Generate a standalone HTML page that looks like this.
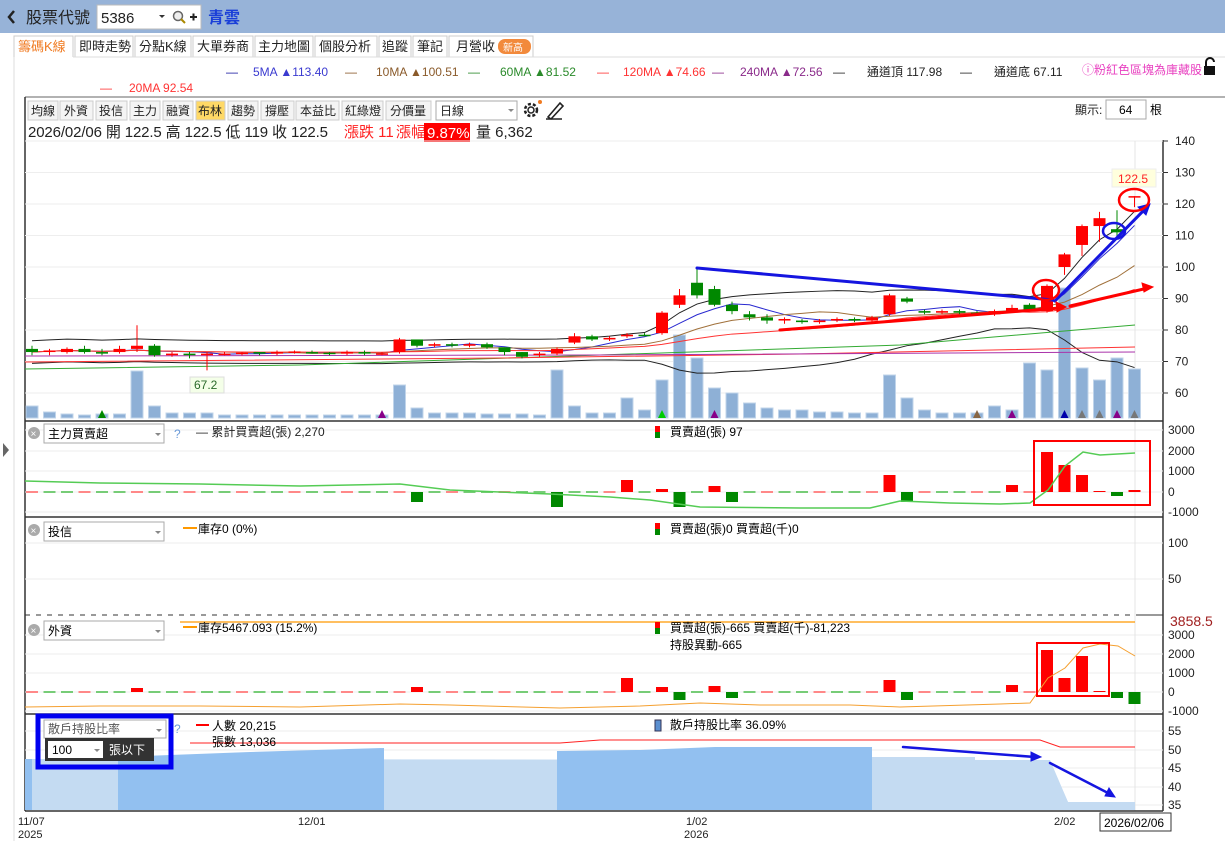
<!DOCTYPE html>
<html><head><meta charset="utf-8">
<style>
body{margin:0;width:1225px;height:841px;overflow:hidden;background:#fff;font-family:"Liberation Sans","Noto Sans CJK TC",sans-serif}
svg text{font-family:"Liberation Sans","Noto Sans CJK TC",sans-serif}
</style></head><body>
<svg id="s" width="1225" height="841" viewBox="0 0 1225 841" xmlns="http://www.w3.org/2000/svg" font-size="12">
<rect x="0" y="0" width="1225" height="33" fill="#97b3d8"/>
<path d="M14 11 L9 17 L14 23" stroke="#222" stroke-width="2.5" fill="none"/>
<text x="26" y="23" font-size="16" fill="#222">股票代號</text>
<rect x="97" y="5" width="104" height="24" fill="#fff" stroke="#bbb"/>
<text x="101" y="23" font-size="15" fill="#222">5386</text>
<path d="M159 15 l3 3 l3 -3z" fill="#333"/>
<circle cx="178" cy="16" r="4.5" fill="#eee" stroke="#666" stroke-width="1.5"/><path d="M181 19 l4 4" stroke="#a80" stroke-width="2"/>
<path d="M190 17 h7 M193.5 13.5 v7" stroke="#222" stroke-width="2"/>
<text x="208" y="23" font-size="16" font-weight="bold" fill="#1a3fd8">青雲</text>
<line x1="14" y1="56" x2="14" y2="841" stroke="#ddd"/>
<path d="M3 443 l6 7 l-6 7z" fill="#666"/>
<g font-size="13" fill="#222">
<path d="M14 57 V36 H73 V57" fill="#fff" stroke="#ccc"/>
<rect x="75" y="36" width="58" height="21" fill="#fff" stroke="#ccc"/><text x="79" y="51">即時走勢</text>
<rect x="135" y="36" width="56" height="21" fill="#fff" stroke="#ccc"/><text x="139" y="51">分點K線</text>
<rect x="193" y="36" width="60" height="21" fill="#fff" stroke="#ccc"/><text x="197" y="51">大單券商</text>
<rect x="255" y="36" width="58" height="21" fill="#fff" stroke="#ccc"/><text x="258" y="51">主力地圖</text>
<rect x="315" y="36" width="62" height="21" fill="#fff" stroke="#ccc"/><text x="319" y="51">個股分析</text>
<rect x="379" y="36" width="32" height="21" fill="#fff" stroke="#ccc"/><text x="382" y="51">追蹤</text>
<rect x="413" y="36" width="34" height="21" fill="#fff" stroke="#ccc"/><text x="417" y="51">筆記</text>
<rect x="449" y="36" width="84" height="21" fill="#fff" stroke="#ccc"/><text x="456" y="51">月營收</text>
<rect x="498" y="39" width="33" height="15" rx="7" fill="#f28a3c"/><text x="503" y="51" font-size="10" fill="#fff">新高</text>
<text x="18" y="51" fill="#f07a20">籌碼K線</text>
</g>
<line x1="73" y1="57" x2="1225" y2="57" stroke="#ddd"/>
<g font-size="12">
<text x="226" y="76" fill="#1a1aa0">—</text><text x="253" y="76" fill="#3a3ad0">5MA ▲113.40</text>
<text x="345" y="76" fill="#8a5a2a">—</text><text x="376" y="76" fill="#8a5a2a">10MA ▲100.51</text>
<text x="468" y="76" fill="#2a8a2a">—</text><text x="500" y="76" fill="#2a8a2a">60MA ▲81.52</text>
<text x="597" y="76" fill="#f33">—</text><text x="623" y="76" fill="#f33">120MA ▲74.66</text>
<text x="712" y="76" fill="#8a2a8a">—</text><text x="740" y="76" fill="#8a2a8a">240MA ▲72.56</text>
<text x="833" y="76" fill="#222">—</text><text x="867" y="76" fill="#222">通道頂 117.98</text>
<text x="960" y="76" fill="#222">—</text><text x="994" y="76" fill="#222">通道底 67.11</text>
<text x="1082" y="74" fill="#e840c0">ⓘ粉紅色區塊為庫藏股</text>
<text x="100" y="92" fill="#f33">—</text><text x="129" y="92" fill="#f33">20MA 92.54</text>
</g>
<rect x="1204" y="66" width="11" height="9" fill="#111"/><path d="M1206 66 v-4 a4 4 0 0 1 8 0" stroke="#111" stroke-width="2" fill="none"/>
<line x1="25" y1="97" x2="1225" y2="97" stroke="#666"/>
<line x1="25" y1="97" x2="25" y2="811" stroke="#333" stroke-width="1.5"/>
<line x1="1163" y1="140" x2="1163" y2="811" stroke="#333" stroke-width="1.5"/>
<g font-size="12" fill="#222">
<rect x="28" y="101" width="30" height="19" fill="#f4f4f4" stroke="#ccc"/><text x="31" y="115">均線</text>
<rect x="60" y="101" width="33" height="19" fill="#f4f4f4" stroke="#ccc"/><text x="64" y="115">外資</text>
<rect x="96" y="101" width="31" height="19" fill="#f4f4f4" stroke="#ccc"/><text x="99" y="115">投信</text>
<rect x="130" y="101" width="30" height="19" fill="#f4f4f4" stroke="#ccc"/><text x="133" y="115">主力</text>
<rect x="163" y="101" width="30" height="19" fill="#f4f4f4" stroke="#ccc"/><text x="166" y="115">融資</text>
<rect x="196" y="101" width="29" height="19" fill="#ffd966" stroke="#ccc"/><text x="198" y="115">布林</text>
<rect x="228" y="101" width="30" height="19" fill="#f4f4f4" stroke="#ccc"/><text x="231" y="115">趨勢</text>
<rect x="261" y="101" width="33" height="19" fill="#f4f4f4" stroke="#ccc"/><text x="265" y="115">撐壓</text>
<rect x="296" y="101" width="43" height="19" fill="#f4f4f4" stroke="#ccc"/><text x="300" y="115">本益比</text>
<rect x="342" y="101" width="41" height="19" fill="#f4f4f4" stroke="#ccc"/><text x="345" y="115">紅綠燈</text>
<rect x="386" y="101" width="45" height="19" fill="#f4f4f4" stroke="#ccc"/><text x="390" y="115">分價量</text>
<rect x="436" y="101" width="81" height="19" fill="#fff" stroke="#aaa"/><text x="440" y="115">日線</text>
<path d="M508 109 l3 3 l3 -3z" fill="#888"/>
</g>
<circle cx="531" cy="110" r="6" fill="none" stroke="#222" stroke-width="2.5" stroke-dasharray="3 2"/><circle cx="531" cy="110" r="3" fill="none" stroke="#222" stroke-width="1.5"/>
<circle cx="540" cy="102" r="2" fill="#f07a20"/>
<path d="M548 117 L560 103 L563 106 L551 119 Z M546 119 h16" stroke="#222" stroke-width="1.6" fill="none"/>
<text x="1075" y="114" font-size="12" fill="#222">顯示:</text>
<rect x="1106" y="100" width="40" height="19" fill="#fff" stroke="#aaa"/><text x="1119" y="114" font-size="12">64</text>
<text x="1150" y="114" font-size="12">根</text>
<g font-size="15" fill="#222">
<text x="28" y="137" textLength="300">2026/02/06 開 122.5  高 122.5  低 119  收 122.5</text>
<text x="344" y="137" fill="#f22">漲跌 11</text>
<text x="396" y="137" fill="#f22">漲幅</text>
<rect x="424" y="123" width="46" height="19" fill="#f00"/><text x="427" y="138" fill="#fff">9.87%</text>
<text x="476" y="137">量 6,362</text>
</g>
<line x1="25" y1="141" x2="1163" y2="141" stroke="#ddd"/>
<g id="grid" stroke="#eee"></g>
<g id="vol"></g>
<g id="lines" fill="none"></g>
<g id="cdl"></g>
<g font-size="12" fill="#222" id="ax"></g>
<line x1="25" y1="421" x2="1163" y2="421" stroke="#333" stroke-width="1.5"/>
<line x1="25" y1="517" x2="1163" y2="517" stroke="#333" stroke-width="1.5"/>
<line x1="25" y1="615" x2="1163" y2="615" stroke="#333" stroke-dasharray="5 6"/>
<line x1="1140" y1="615" x2="1163" y2="615" stroke="#333"/>
<line x1="25" y1="714" x2="1163" y2="714" stroke="#333" stroke-width="1.5"/>
<line x1="25" y1="811" x2="1163" y2="811" stroke="#333" stroke-width="1.5"/>
<g id="p2"></g>
<circle cx="34" cy="433" r="6" fill="#aaa"/><text x="30.5" y="437" font-size="10" fill="#fff">×</text>
<rect x="44" y="424" width="120" height="19" fill="#fff" stroke="#aaa"/><text x="48" y="438" font-size="12">主力買賣超</text><path d="M155 433 l3 3 l3 -3z" fill="#888"/>
<text x="174" y="438" font-size="12" fill="#6a9ad8">?</text>
<text x="196" y="436" font-size="12" fill="#222">— 累計買賣超(張) 2,270</text>
<rect x="655" y="426" width="5" height="6" fill="#f00"/><rect x="655" y="432" width="5" height="6" fill="#080"/>
<text x="670" y="436" font-size="12">買賣超(張) 97</text>
<rect x="1034" y="441" width="116" height="64" fill="none" stroke="#f00" stroke-width="2"/>
<circle cx="34" cy="530" r="6" fill="#aaa"/><text x="30.5" y="534" font-size="10" fill="#fff">×</text>
<rect x="44" y="522" width="120" height="19" fill="#fff" stroke="#aaa"/><text x="48" y="536" font-size="12">投信</text><path d="M155 531 l3 3 l3 -3z" fill="#888"/>
<line x1="183" y1="528" x2="197" y2="528" stroke="#f90" stroke-width="2"/><text x="198" y="533" font-size="12">庫存0 (0%)</text>
<rect x="655" y="523" width="5" height="6" fill="#f00"/><rect x="655" y="529" width="5" height="6" fill="#080"/>
<text x="670" y="533" font-size="12">買賣超(張)0 買賣超(千)0</text>
<g id="p4"></g>
<line x1="180" y1="622" x2="1135" y2="622" stroke="#f90" stroke-width="1.2"/>
<circle cx="34" cy="630" r="6" fill="#aaa"/><text x="30.5" y="634" font-size="10" fill="#fff">×</text>
<rect x="44" y="621" width="120" height="19" fill="#fff" stroke="#aaa"/><text x="48" y="635" font-size="12">外資</text><path d="M155 630 l3 3 l3 -3z" fill="#888"/>
<line x1="183" y1="627" x2="197" y2="627" stroke="#f90" stroke-width="2"/><text x="198" y="632" font-size="12">庫存5467.093 (15.2%)</text>
<rect x="655" y="622" width="5" height="6" fill="#f00"/><rect x="655" y="628" width="5" height="6" fill="#080"/>
<text x="670" y="632" font-size="12">買賣超(張)-665 買賣超(千)-81,223</text>
<text x="670" y="649" font-size="12">持股異動-665</text>
<rect x="1037" y="643" width="72" height="53" fill="none" stroke="#f00" stroke-width="2"/>
<text x="1170" y="626" font-size="14" fill="#a02020">3858.5</text>
<polygon points="25,810 25,759 1050,760 1068,802 1135,802 1135,810" fill="#c4dbf2"/>
<polygon points="25,810 25,759 32,759 32,810" fill="#92c0f0"/>
<polygon points="118,810 118,757 250,752 384,748 384,810" fill="#92c0f0"/>
<polygon points="557,810 557,751 640,750 715,747 872,747 872,810" fill="#92c0f0"/>
<polygon points="384,810 384,761 557,762 557,810" fill="#c4dbf2"/>
<polygon points="872,810 872,757 975,757 975,762 1050,762 1068,802 1135,802 1135,810" fill="#c4dbf2"/>
<polyline points="190,743 560,743 600,740 1040,740 1060,747 1135,747" fill="none" stroke="#f22" stroke-width="1"/>
<rect x="38" y="716" width="133" height="51" fill="none" stroke="#0000f0" stroke-width="5"/>
<rect x="44" y="720" width="122" height="18" fill="#fff" stroke="#aaa"/><text x="48" y="733" font-size="12" fill="#555">散戶持股比率</text><path d="M156 729 l3 3 l3 -3z" fill="#888"/>
<rect x="45" y="738" width="109" height="23" fill="#333"/>
<rect x="48" y="741" width="55" height="17" fill="#fff"/><text x="52" y="754" font-size="12">100</text><path d="M94 749 l3 3 l3 -3z" fill="#888"/>
<text x="109" y="754" font-size="12" fill="#fff">張以下</text>
<text x="174" y="733" font-size="12" fill="#6a9ad8">?</text>
<line x1="196" y1="725" x2="209" y2="725" stroke="#f00" stroke-width="2"/><text x="212" y="730" font-size="12">人數 20,215</text>
<text x="212" y="746" font-size="12">張數 13,036</text>
<rect x="655" y="720" width="6" height="11" fill="#5b8fd0" stroke="#335"/>
<text x="670" y="729" font-size="12">散戶持股比率 36.09%</text>
<g font-size="11" fill="#222">
<text x="18" y="825">11/07</text><text x="18" y="838">2025</text>
<text x="298" y="825">12/01</text>
<text x="686" y="825">1/02</text><text x="684" y="838">2026</text>
<text x="1054" y="825">2/02</text>
</g>
<rect x="1100" y="813" width="71" height="18" fill="#fff" stroke="#333"/><text x="1104" y="827" font-size="12">2026/02/06</text>
<g fill="none" stroke-linecap="round">
<polyline points="697,268 1053,300" stroke="#1515e0" stroke-width="3"/>
<polyline points="1055,301 1146,208" stroke="#1515e0" stroke-width="3"/>
<path d="M1150 204 l-12 3 l8 8z" fill="#1515e0" stroke="#1515e0"/>
<polyline points="780,330 1060,308" stroke="#f00" stroke-width="3"/>
<path d="M1066 307 l-10 -5 l1 10z" fill="#f00" stroke="#f00"/>
<polyline points="1070,306 1148,288" stroke="#f00" stroke-width="3"/>
<path d="M1153 287 l-11 -4 l2 9z" fill="#f00" stroke="#f00"/>
<ellipse cx="1046" cy="290" rx="13" ry="10" stroke="#f00" stroke-width="2.5"/>
<ellipse cx="1114" cy="231" rx="11" ry="8" stroke="#1515e0" stroke-width="2.5"/>
<ellipse cx="1134" cy="200" rx="15" ry="11" stroke="#f00" stroke-width="2.5"/>
<polyline points="903,747 1035,757" stroke="#1515e0" stroke-width="2.5"/>
<path d="M1041 757 l-10 -5 l0 9z" fill="#1515e0" stroke="#1515e0"/>
<polyline points="1050,763 1108,793" stroke="#1515e0" stroke-width="2.5"/>
<path d="M1115 797 l-6 -9 l-4 8z" fill="#1515e0" stroke="#1515e0"/>
</g>
<rect x="1112" y="169" width="44" height="18" fill="#ffffdd" stroke="#eee"/><text x="1118" y="183" font-size="12" fill="#f22">122.5</text>
<rect x="190" y="377" width="34" height="16" fill="#f4ffe8" stroke="#ddd"/><text x="194" y="389" font-size="12" fill="#2a6a2a">67.2</text>
</svg>
<script>
var NS="http://www.w3.org/2000/svg";
function el(p,t,a){var e=document.createElementNS(NS,t);for(var k in a)e.setAttribute(k,a[k]);document.getElementById(p).appendChild(e);return e;}
function Y(p){return 141+(140-p)*3.15}
function X(i){return 32+i*17.5}
var D=[[74,73,75,72],[73,73.5,74,72],[73,74,74.5,72.5],[74,73,75,72.5],[73,72.5,74,72],[73,74,75,72.5],[74,75,81.5,73],[75,72,75.5,71.5],[72,72.5,73,71.5],[72.5,72,73,71],[72,72.5,73,67.2],[72.5,72.5,73,72],[72.5,72.8,73,72],[73,72.5,73,72],[72.5,73,73.5,72],[73,73.2,73.5,72.5],[73,72.8,73.5,72.5],[72.8,72.5,73,72],[72.5,73,73.5,72],[73,72.5,73.5,72],[72.5,72.6,73,72],[73,77,77.5,72.5],[77,75,77,74.5],[75,75.5,76,74.5],[75.5,75,76,74.5],[75,75.5,76,74.5],[75.5,74.5,76,74],[74.5,73,74.5,72],[73,71.5,73,71],[72,72.5,73,71.5],[72.5,74,74.5,72],[76,78,79,75.5],[78,77,78.5,76.5],[77,77.5,78,76.5],[78,78.5,79,77.5],[78.5,78.2,79,78],[79,85.5,86,78.5],[88,91,93,87],[95,91,100,90],[93,88,94,87.5],[88,86,89,85],[85,84,86,83],[84,83,85,82],[83,83.5,84,82],[83,82.5,83.5,82],[82.5,83,83.5,82],[83,83.5,84,82.5],[83.5,83,84,82.5],[83,84,84.5,82.5],[85,91,91.5,84.5],[90,89,90.5,88.5],[86,85.5,86.5,85],[85.5,86,86.5,85],[86,85.5,86.5,85],[85.5,85,86,84.5],[85,86,86.5,84.5],[86,87,88,85.5],[88,86.5,88.5,86],[86,94,94.5,85.5],[100,104,104.5,97.5],[107,113,113.5,103.5],[113,115.5,117.5,108],[112,111,118,109],[122.5,122.5,122.5,119]];
var V=[12,6,4,3,4,4,47,12,5,5,5,3,3,3,3,3,3,3,3,3,3,33,10,5,5,5,4,4,4,3,48,12,5,5,20,8,38,83,60,30,25,15,10,8,8,6,6,5,5,43,20,8,5,5,5,12,8,55,48,130,50,38,60,49];
[140,130,120,110,100,90,80,70,60].forEach(function(p){el("grid","line",{x1:25,x2:1163,y1:Y(p),y2:Y(p)});el("ax","text",{x:1175,y:Y(p)+4}).textContent=p;el("ax","line",{x1:1163,x2:1168,y1:Y(p),y2:Y(p),stroke:"#333"});});
[[430,"3000"],[451,"2000"],[471,"1000"],[492,"0"],[512,"-1000"],[543,"100"],[579,"50"],[635,"3000"],[654,"2000"],[673,"1000"],[692,"0"],[711,"-1000"],[731,"55"],[750,"50"],[768,"45"],[787,"40"],[805,"35"]].forEach(function(a){el("grid","line",{x1:25,x2:1163,y1:a[0],y2:a[0]});el("ax","text",{x:1168,y:a[0]+4}).textContent=a[1];});
el("grid","line",{x1:1135,x2:1135,y1:141,y2:811,stroke:"#e4e4e4"});
V.forEach(function(h,i){el("vol","rect",{x:X(i)-6,y:418-h,width:12,height:h,fill:"#8eb0d6",stroke:"#c0d4ea"});});
[[4,"#080"],[20,"#808"],[36,"#0c0"],[39,"#808"],[54,"#864"],[56,"#808"],[59,"#00a"],[60,"#777"],[61,"#777"],[62,"#808"],[63,"#777"]].forEach(function(a){var x=X(a[0]);el("vol","path",{d:"M"+(x-4)+" 418 l4 -8 l4 8z",fill:a[1]});});
var C=D.map(function(d){return d[1]});
function ma(n){var pts=[];for(var i=0;i<64;i++){var s=0,c=0;for(var j=Math.max(0,i-n+1);j<=i;j++){s+=C[j];c++;}pts.push([X(i),s/c]);}return pts;}
function pl(pts,col,w){el("lines","polyline",{points:pts.map(function(p){return p[0]+","+Y(p[1])}).join(" "),stroke:col,"stroke-width":w||1});}
pl(ma(5),"#2a2ad0");pl(ma(10),"#a0703a");pl(ma(20),"#f33");
var m20=ma(20),up=[],dn=[];
for(var i=0;i<64;i++){var s=0,c=0,m=m20[i][1];for(var j=Math.max(0,i-19);j<=i;j++){s+=(C[j]-m)*(C[j]-m);c++;}var sd=Math.sqrt(s/c);sd=Math.max(sd,1.8);up.push([X(i),m+2*sd]);dn.push([X(i),m-2*sd]);}
pl(up,"#222");pl(dn,"#222");
el("lines","polyline",{points:"25,369 300,365 600,355 900,345 1135,325",stroke:"#3a3"});
el("lines","polyline",{points:"25,362 500,358 800,354 1135,347",stroke:"#f33"});
el("lines","polyline",{points:"25,356 600,355 1135,352",stroke:"#a3a"});
D.forEach(function(d,i){var x=X(i),o=d[0],c=d[1],r=c>=o,col=r?"#f00":"#080";
el("cdl","line",{x1:x,x2:x,y1:Y(d[2]),y2:Y(d[3]),stroke:col});
var t=Y(Math.max(o,c)),h=Math.max(1.5,Math.abs(Y(o)-Y(c)));
el("cdl","rect",{x:x-6,y:t,width:12,height:h,fill:col});});
var B2={22:-10,30:-15,34:12,36:3,37:-15,39:6,40:-10,49:17,50:-10,56:7,58:40,59:27,60:17,61:1,62:-4,63:2};
for(var i=0;i<64;i++){var v=B2[i];if(v===undefined){el("p2","rect",{x:X(i)-6,y:491,width:12,height:2,fill:i%3?"#7c7":"#f88"});continue;}
el("p2","rect",{x:X(i)-6,y:v>0?492-v:492,width:12,height:Math.abs(v),fill:v>0?"#f00":"#080"});}
el("p2","polyline",{points:"25,481 100,483 200,484 300,486 400,484 450,490 550,494 610,497 650,500 700,507 800,508 870,508 900,501 950,503 1000,504 1030,503 1048,490 1065,466 1083,452 1100,455 1135,453",fill:"none",stroke:"#5c5","stroke-width":1.5});
var B4={6:4,22:5,34:14,36:5,37:-8,39:6,40:-6,49:12,50:-8,56:7,58:42,59:14,60:36,61:1,62:-6,63:-12};
for(var i=0;i<64;i++){var v=B4[i];if(v===undefined){el("p4","rect",{x:X(i)-6,y:691,width:12,height:2,fill:i%3?"#7c7":"#f88"});continue;}
el("p4","rect",{x:X(i)-6,y:v>0?692-v:692,width:12,height:Math.abs(v),fill:v>0?"#f00":"#080"});}
el("p4","polyline",{points:"25,707 100,706 200,706 300,707 400,704 450,705 560,708 640,706 700,703 760,705 850,705 900,707 1000,704 1030,703 1048,678 1065,668 1083,648 1100,644 1118,646 1135,656",fill:"none",stroke:"#f5a030","stroke-width":1});
</script>
</body></html>
